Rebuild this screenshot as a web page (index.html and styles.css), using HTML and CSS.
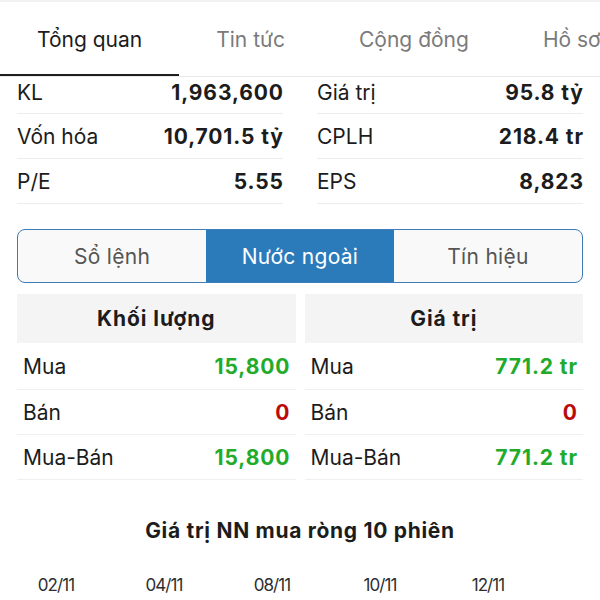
FILE: index.html
```html
<!DOCTYPE html>
<html lang="vi">
<head>
<meta charset="utf-8">
<link rel="stylesheet" href="styles.css">
</head>
<body>
<nav class="tabs">
  <div class="tab active">Tổng quan</div>
  <div class="tab">Tin tức</div>
  <div class="tab">Cộng đồng</div>
  <div class="tab">Hồ sơ</div>
</nav>

<section class="stats">
  <div class="col">
    <div class="row first"><span>KL</span><b>1,963,600</b></div>
    <div class="row"><span>Vốn hóa</span><b>10,701.5 tỷ</b></div>
    <div class="row"><span>P/E</span><b>5.55</b></div>
  </div>
  <div class="col">
    <div class="row first"><span>Giá trị</span><b>95.8 tỷ</b></div>
    <div class="row"><span>CPLH</span><b>218.4 tr</b></div>
    <div class="row"><span>EPS</span><b>8,823</b></div>
  </div>
</section>

<div class="segment">
  <div class="seg">Sổ lệnh</div>
  <div class="seg selected">Nước ngoài</div>
  <div class="seg">Tín hiệu</div>
</div>

<section class="foreign">
  <div class="fcol">
    <div class="fhead">Khối lượng</div>
    <div class="frow top"><span>Mua</span><b class="up">15,800</b></div>
    <div class="frow"><span>Bán</span><b class="down">0</b></div>
    <div class="frow"><span>Mua-Bán</span><b class="up">15,800</b></div>
  </div>
  <div class="fcol">
    <div class="fhead">Giá trị</div>
    <div class="frow top"><span>Mua</span><b class="up">771.2 tr</b></div>
    <div class="frow"><span>Bán</span><b class="down">0</b></div>
    <div class="frow"><span>Mua-Bán</span><b class="up">771.2 tr</b></div>
  </div>
</section>

<h2 class="chart-title">Giá trị NN mua ròng 10 phiên</h2>

<div class="dates">
  <span>02/11</span><span>04/11</span><span>08/11</span><span>10/11</span><span>12/11</span>
</div>
</body>
</html>
```

FILE: styles.css
```css
* { box-sizing: border-box; }

html, body {
  margin: 0;
  padding: 0;
  background: #fff;
  width: 600px;
  height: 600px;
  overflow: hidden;
  font-family: Inter, "Noto Sans", "DejaVu Sans", sans-serif;
  color: #1c1c1c;
}

.tabs {
  display: flex;
  height: 77px;
  border-top: 2px solid #f1f1f1;
  border-bottom: 1px solid #e9e9e9;
  white-space: nowrap;
  overflow: hidden;
}

.tab {
  flex: 0 0 auto;
  display: flex;
  align-items: center;
  padding: 2px 37px 0;
  margin-bottom: -1px;
  border-bottom: 3px solid transparent;
  font-size: 21px;
  color: #7a7a7a;
}

.tab.active {
  color: #1c1c1c;
  border-bottom-color: #1e1e1e;
}

.stats {
  display: grid;
  grid-template-columns: 1fr 1fr;
  column-gap: 34px;
  padding: 0 17px;
}

.row {
  display: flex;
  justify-content: space-between;
  align-items: center;
  height: 45px;
  border-bottom: 1px solid #ececec;
  font-size: 21px;
}

.row.first {
  height: 37px;
  padding-bottom: 5px;
}

.row b, .frow b {
  font-weight: 700;
  letter-spacing: 0.9px;
  margin-right: -0.9px;
}

.segment {
  display: grid;
  grid-template-columns: 1fr 1fr 1fr;
  margin: 25px 17px 0;
  height: 54px;
  border: 1.5px solid #3d7cb4;
  border-radius: 8px;
  overflow: hidden;
  background: #f9f9f9;
}

.seg {
  display: flex;
  align-items: center;
  justify-content: center;
  font-size: 21px;
  letter-spacing: 0.3px;
  color: #555;
}

.seg.selected {
  background: #2b7bbb;
  color: #fff;
}

.foreign {
  display: grid;
  grid-template-columns: 1fr 1fr;
  column-gap: 9px;
  margin: 11px 17px 0;
}

.fhead {
  height: 49px;
  background: #f4f4f4;
  display: flex;
  align-items: center;
  justify-content: center;
  font-size: 21px;
  font-weight: 700;
  letter-spacing: 0.9px;
  color: #1c1c1c;
}

.frow {
  display: flex;
  justify-content: space-between;
  align-items: center;
  height: 45px;
  padding: 0 6px;
  border-bottom: 1px solid #efefef;
  font-size: 21px;
}

.frow.top {
  height: 47px;
}

.up { color: #22ab2a; }
.down { color: #b90b0b; }

.chart-title {
  margin: 37px 0 0;
  text-align: center;
  font-size: 21px;
  font-weight: 700;
  letter-spacing: 0.7px;
  color: #1c1c1c;
  line-height: 28px;
}

.dates {
  display: flex;
  padding-left: 2px;
  margin-top: 30px;
}

.dates span {
  width: 108px;
  text-align: center;
  font-size: 17px;
  letter-spacing: -0.9px;
  color: #2e2e2e;
}
```
